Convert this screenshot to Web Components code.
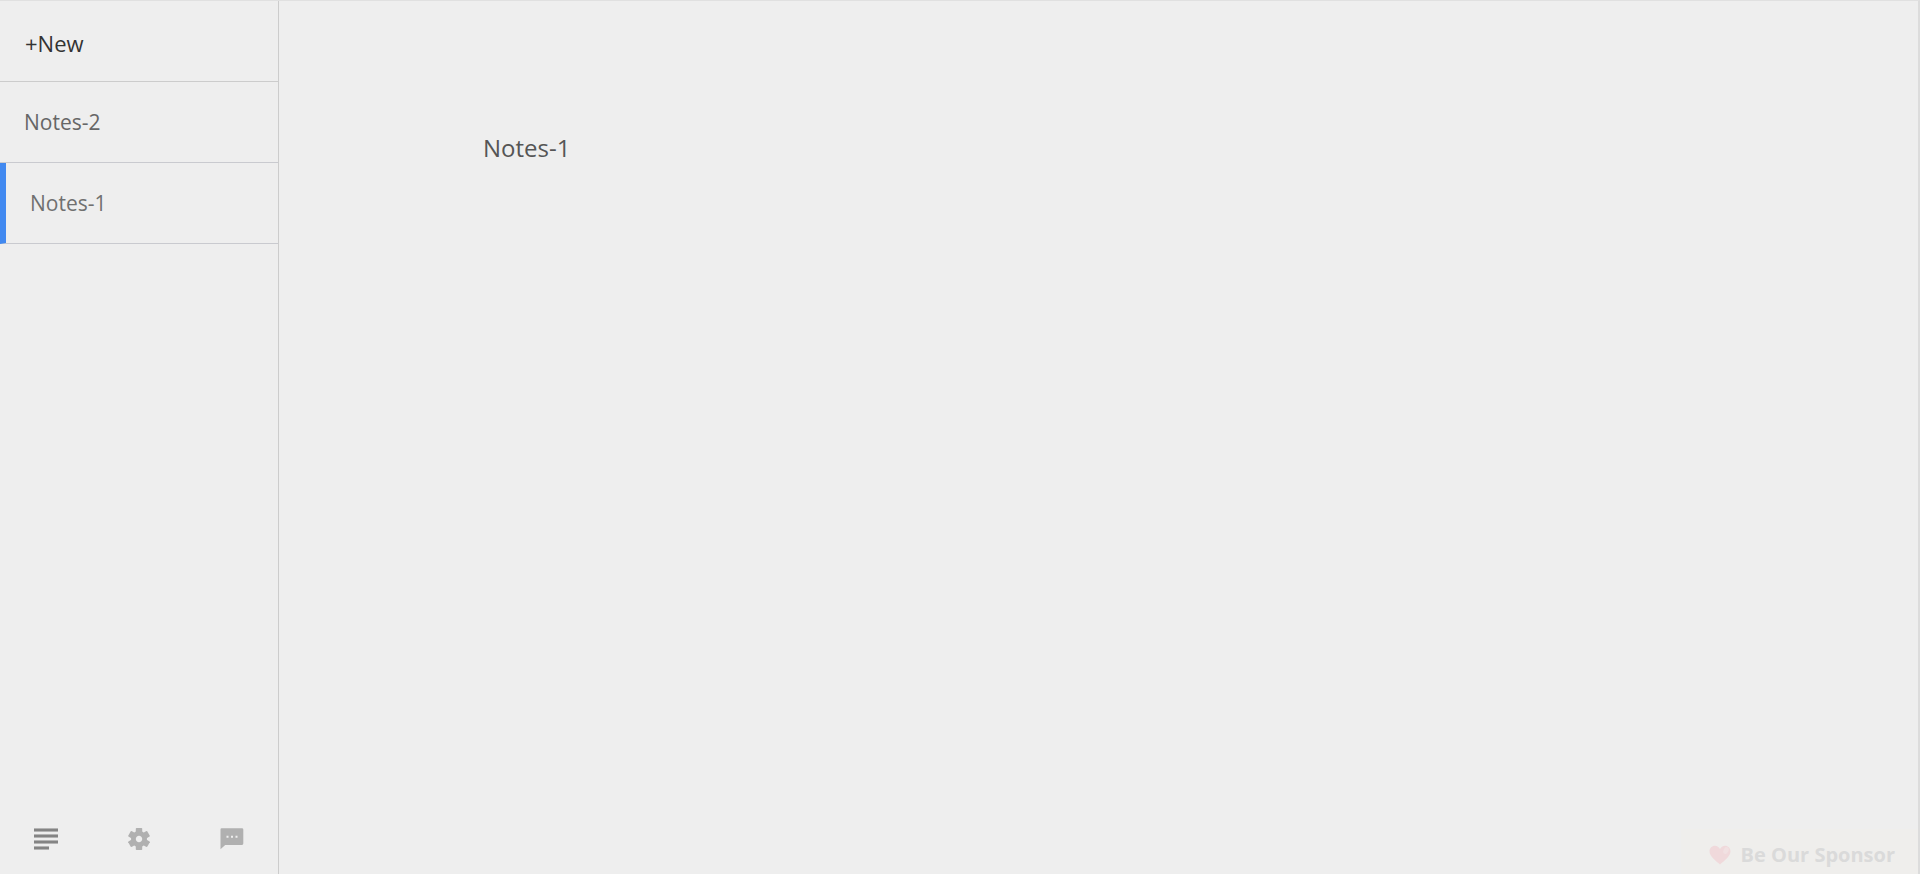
<!DOCTYPE html>
<html lang="en">
<head>
<meta charset="utf-8">
<title>Notes</title>
<style>
  html, body {
    height: 100%;
    margin: 0;
  }

  body {
    background: #eee;
    font-family: "Open Sans", "Noto Sans", sans-serif;
    --line: #ccc;
    --accent: #4189f0;
  }
</style>
</head>
<body>
<notes-app>
  <note-sidebar slot="sidebar">
    <note-item>Notes-2</note-item>
    <note-item active>Notes-1</note-item>
  </note-sidebar>
  <note-editor value="Notes-1"></note-editor>
  <sponsor-link slot="badge">Be Our Sponsor</sponsor-link>
</notes-app>

<script>
class NotesApp extends HTMLElement {
  constructor() {
    super();
    this.attachShadow({ mode: 'open' });
    this.shadowRoot.innerHTML = `
      <style>
        :host {
          display: flex;
          height: 100%;
          box-sizing: border-box;
          position: relative;
          border-top: 1px solid #e0e0e0;
          border-right: 2px solid #dcdcdc;
        }

        main {
          flex: 1;
          display: flex;
          min-width: 0;
        }
      </style>
      <slot name="sidebar"></slot>
      <main><slot></slot></main>
      <slot name="badge"></slot>
    `;
  }
}

class NoteSidebar extends HTMLElement {
  constructor() {
    super();
    this.attachShadow({ mode: 'open' });
    this.shadowRoot.innerHTML = `
      <style>
        :host {
          display: flex;
          flex-direction: column;
          flex: none;
          width: 278px;
          border-right: 1px solid var(--line);
        }

        button {
          background: none;
          border: 0;
          padding: 0;
          font: inherit;
          cursor: pointer;
        }

        .new {
          height: 81px;
          padding: 4px 25px 0;
          border-bottom: 1px solid var(--line);
          color: #333;
          font-size: 22px;
          line-height: 32px;
          text-align: left;
        }

        nav {
          flex: 1;
          overflow: auto;
        }

        .tools {
          display: grid;
          grid-template-columns: repeat(3, 1fr);
          height: 68px;
        }

        .tools button {
          display: flex;
          align-items: center;
          justify-content: center;
          color: #b0b0b0;
        }

        svg {
          width: 24px;
          height: 24px;
          fill: currentColor;
        }
      </style>
      <button class="new" type="button">+New</button>
      <nav aria-label="Notes"><slot></slot></nav>
      <div class="tools">
        <button type="button" aria-label="Note list">
          <svg viewBox="0 0 24 24">
            <path d="M0 0h24v4H0zM0 6h24v4H0zM0 12h24v4H0zM0 18h15v4H0z" fill="#b4b4b4"/>
            <path d="M0 1h24v2H0zM0 7h24v2H0zM0 13h24v2H0zM0 19h15v2H0z" fill="#848484"/>
          </svg>
        </button>
        <button type="button" aria-label="Settings">
          <svg viewBox="-12 -11 24 24">
            <defs><path id="tooth" d="M-2.600-11h5.200l.6.6V-6h-6.400v-4.400z"/></defs>
            <circle r="5.600" fill="none" stroke="currentColor" stroke-width="4.800"/>
            <use href="#tooth"/>
            <use href="#tooth" transform="rotate(60)"/>
            <use href="#tooth" transform="rotate(120)"/>
            <use href="#tooth" transform="rotate(180)"/>
            <use href="#tooth" transform="rotate(240)"/>
            <use href="#tooth" transform="rotate(300)"/>
          </svg>
        </button>
        <button type="button" aria-label="Feedback">
          <svg viewBox="0 0 24 24">
            <path d="M2 .3h20a1.300 1.300 0 0 1 1.300 1.300v14a1.300 1.300 0 0 1-1.300 1.300H5.200L.5 21.300V1.600A1.300 1.300 0 0 1 2 .3z"/>
            <path d="M6.500 7.800h2v2h-2zM11 7.800h2v2h-2zM15.500 7.800h2v2h-2z" fill="#eee"/>
          </svg>
        </button>
      </div>
    `;
  }
}

class NoteItem extends HTMLElement {
  constructor() {
    super();
    this.attachShadow({ mode: 'open' });
    this.shadowRoot.innerHTML = `
      <style>
        :host {
          display: block;
          border-bottom: 1px solid #c9cacf;
        }

        :host([active]) {
          border-left: 6px solid var(--accent);
        }

        a {
          display: block;
          padding: 24px;
          color: #666;
          font-size: 21px;
          line-height: 32px;
          text-decoration: none;
        }

        :host([active]) a {
          color: #707070;
        }
      </style>
      <a href="#"><slot></slot></a>
    `;
  }
}

class NoteEditor extends HTMLElement {
  constructor() {
    super();
    this.attachShadow({ mode: 'open' });
    this.shadowRoot.innerHTML = `
      <style>
        :host {
          display: flex;
          flex: 1;
        }

        textarea {
          flex: 1;
          box-sizing: border-box;
          padding: 128px 200px 64px 204px;
          border: 0;
          outline: 0;
          resize: none;
          background: transparent;
          color: #555;
          font: inherit;
          font-size: 24px;
          line-height: 38px;
        }
      </style>
      <textarea aria-label="Note text" spellcheck="false"></textarea>
    `;
  }

  connectedCallback() {
    this.shadowRoot.querySelector('textarea').value = this.getAttribute('value') || '';
  }
}

class SponsorLink extends HTMLElement {
  constructor() {
    super();
    this.attachShadow({ mode: 'open' });
    this.shadowRoot.innerHTML = `
      <style>
        :host {
          display: block;
          position: absolute;
          right: 0;
          bottom: 0;
        }

        a {
          display: flex;
          align-items: center;
          gap: 10px;
          padding: 14px 23px 7px 28px;
          background: #efeeec;
          color: #dadada;
          font-size: 20px;
          font-weight: 700;
          line-height: 24px;
          text-decoration: none;
        }

        svg {
          width: 22px;
          height: 20px;
        }
      </style>
      <a href="#">
        <svg viewBox="0 0 22 20" aria-hidden="true">
          <path d="M11 19.500C7 16 .5 11.500 .5 6.300.5 3 3 .7 5.900.7 8.200.7 10 2 11 4 12 2 13.800.7 16.100.7 19 .7 21.500 3 21.500 6.300 21.500 11.500 15 16 11 19.500z" fill="#f0d9db"/>
          <ellipse cx="17" cy="5.500" rx="2.500" ry="3.500" transform="rotate(25 17 5.500)" fill="#f1e1e2"/>
        </svg>
        <span><slot></slot></span>
      </a>
    `;
  }
}

customElements.define('notes-app', NotesApp);
customElements.define('note-sidebar', NoteSidebar);
customElements.define('note-item', NoteItem);
customElements.define('note-editor', NoteEditor);
customElements.define('sponsor-link', SponsorLink);
</script>
</body>
</html>
